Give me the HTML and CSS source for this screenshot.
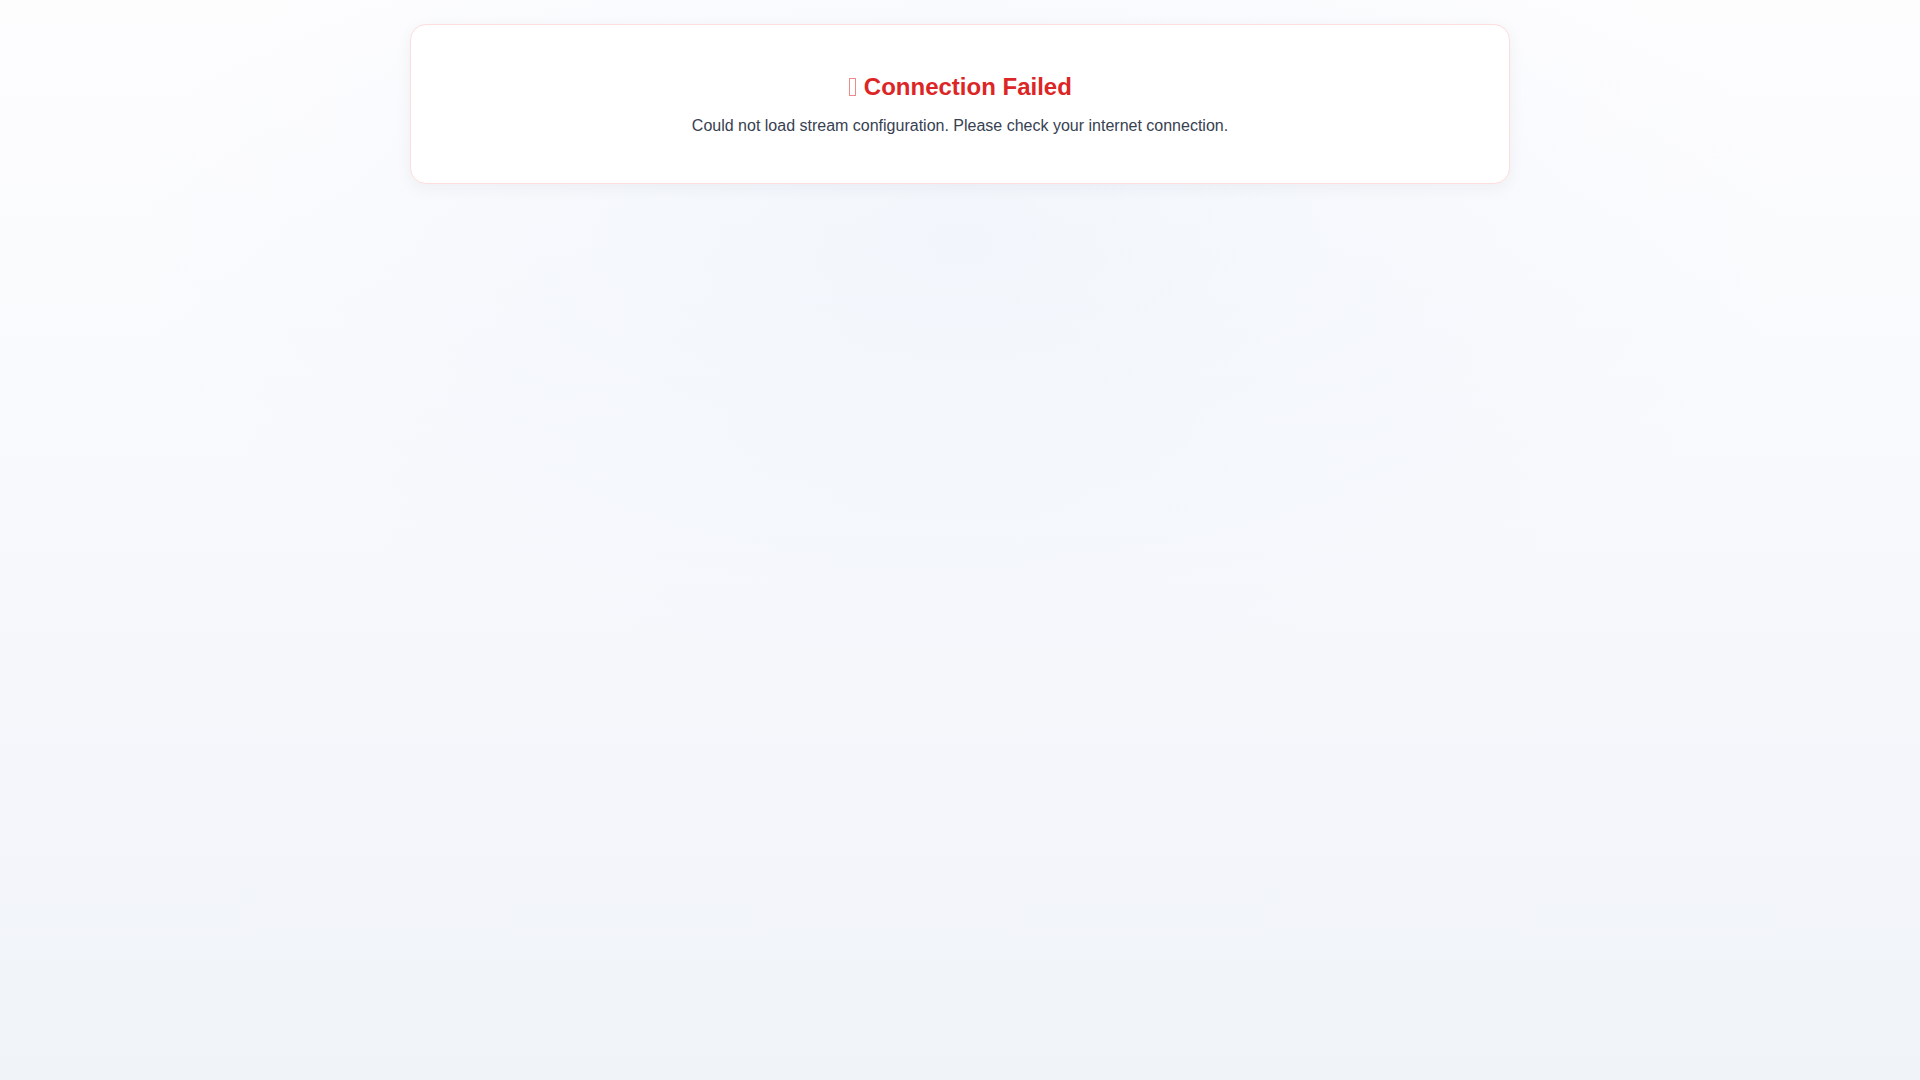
FILE: index.html
```html
<!DOCTYPE html>
<html lang="en">
<head>
<meta charset="utf-8">
<title>Connection Failed</title>
<link rel="stylesheet" href="styles.css">
</head>
<body>
<main class="page">
  <section class="error-card">
    <h2 class="error-title"><span class="tofu"></span> Connection Failed</h2>
    <p class="error-text">Could not load stream configuration. Please check your internet connection.</p>
  </section>
</main>
</body>
</html>
```

FILE: styles.css
```css
html, body {
  margin: 0;
  padding: 0;
  height: 100%;
}
body {
  font-family: "Liberation Sans", Arial, sans-serif;
  background:
    radial-gradient(ellipse 820px 440px at 50% 22%, rgba(232, 240, 250, 0.45), rgba(232, 240, 250, 0) 100%),
    linear-gradient(180deg, #fdfdfe 0%, #f7f9fc 45%, #f0f3f8 100%);
  min-height: 100vh;
}
.page {
  padding: 24px 0;
  display: flex;
  justify-content: center;
}
.error-card {
  width: 1100px;
  box-sizing: border-box;
  background: #ffffff;
  border: 1px solid #fddede;
  border-radius: 16px;
  box-shadow: 0 4px 16px rgba(30, 41, 59, 0.05);
  padding: 48px 24px;
  text-align: center;
}
.error-title {
  margin: 0 0 16px;
  font-size: 24px;
  line-height: 28px;
  font-weight: 700;
  color: #dc2626;
}
.tofu {
  display: inline-block;
  width: 5px;
  height: 16px;
  border: 1px solid #ee8a8a;
  vertical-align: -1px;
  margin: 0 1px;
}
.error-text {
  margin: 0;
  font-size: 16px;
  line-height: 18px;
  color: #374151;
}
```
